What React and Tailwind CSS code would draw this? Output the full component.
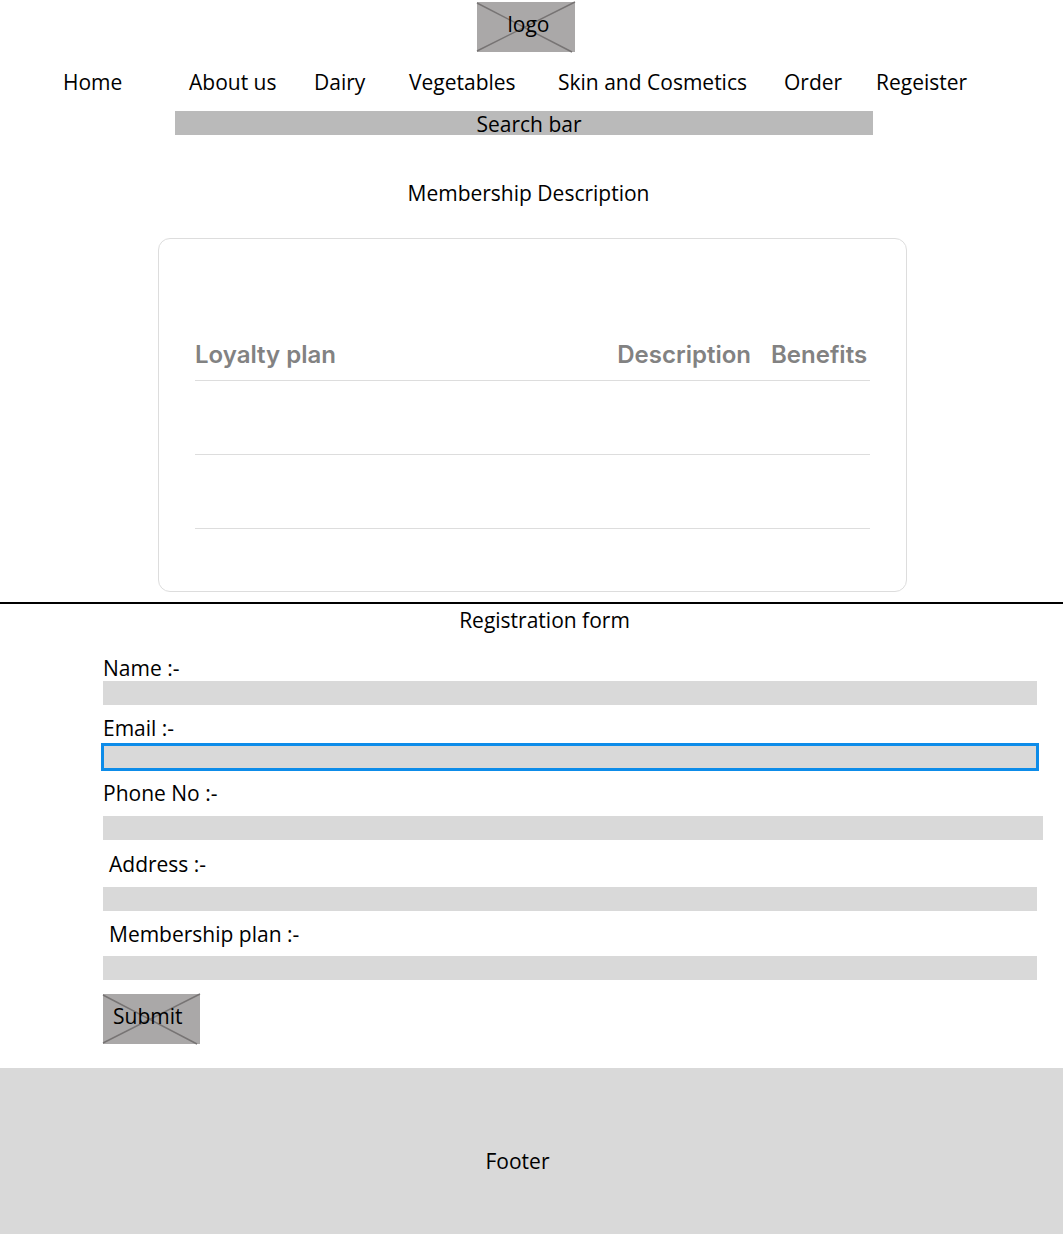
const navItems = ["Home", "About us", "Dairy", "Vegetables", "Skin and Cosmetics", "Order", "Regeister"];

const fields = [
  { id: "name", label: "Name :-", type: "text", row: "mt-6", labelBox: "mb-px", input: "mr-[26px] h-6" },
  { id: "email", label: "Email :-", type: "email", row: "mt-[11px]", labelBox: "mb-[3px]", input: "-ml-0.5 mr-6 h-7 border-3 border-[#0d8ce9]" },
  { id: "phone", label: "Phone No :-", type: "tel", row: "mt-2.5", labelBox: "mb-[11px]", input: "mr-5 h-6" },
  { id: "address", label: "Address :-", type: "text", row: "mt-3", labelBox: "mb-[11px] ml-1.5", input: "mr-[26px] h-6" },
  { id: "plan", label: "Membership plan :-", type: "text", row: "mt-[11px]", labelBox: "mb-2.5 ml-1.5", input: "mr-[26px] h-6" },
];

function CrossedBox() {
  return (
    <svg className="absolute inset-0 h-full w-full overflow-visible" viewBox="0 0 98 50" preserveAspectRatio="none" aria-hidden="true">
      <path d="M0 1L95 50M98 0L0 49" stroke="#777474" strokeWidth="1.5" fill="none" />
    </svg>
  );
}

export default function App() {
  return (
    <div className="flex min-h-screen flex-col bg-white font-['Open_Sans','Noto_Sans',sans-serif] text-[21px] leading-6 text-black">
      <header className="pt-0.5">
        <a href="#" className="relative mx-auto flex h-[50px] w-[98px] -translate-x-1.5 justify-center bg-[#aaa8a8] pt-2.5 pl-1.5">
          <CrossedBox />
          <span className="relative">logo</span>
        </a>
        <nav className="mt-[18px] grid grid-cols-[126fr_125fr_95fr_149fr_226fr_92fr_187fr] pl-[63px] whitespace-nowrap">
          {navItems.map((label) => (
            <a key={label} href="#">{label}</a>
          ))}
        </nav>
        <input aria-label="Search" placeholder="Search bar" className="mt-[17px] ml-[175px] block h-6 w-[calc(100%-365px)] bg-[#bababa] pt-px pl-2.5 text-center placeholder:text-black" />
      </header>

      <main>
        <h1 className="mt-[46px] pr-1.5 text-center">Membership Description</h1>
        <section className="mt-[33px] mr-[156px] ml-[158px] rounded-xl border border-[#ddd] px-9 pt-[91px] pb-[62px]">
          <table className="w-full font-['Inter',sans-serif] text-[24px] text-[#828282]">
            <thead>
              <tr className="h-[50px] border-b border-[#ddd]">
                <th className="text-left font-semibold">Loyalty plan</th>
                <th className="pr-5 text-right font-semibold">Description</th>
                <th className="w-[99px] text-left font-semibold">Benefits</th>
              </tr>
            </thead>
            <tbody>
              <tr className="h-[74px] border-b border-[#ddd]"><td /><td /><td /></tr>
              <tr className="h-[74px] border-b border-[#ddd]"><td /><td /><td /></tr>
            </tbody>
          </table>
        </section>
        <hr className="mt-2.5 border-t-2 border-black" />
        <form className="pl-[103px]">
          <h2 className="mt-1 pr-[77px] text-center">Registration form</h2>
          {fields.map((field) => (
            <div key={field.id} className={`flex flex-col ${field.row}`}>
              <label htmlFor={field.id} className={`self-start ${field.labelBox}`}>{field.label}</label>
              <input id={field.id} type={field.type} className={`bg-[#d9d9d9] px-2 ${field.input}`} />
            </div>
          ))}
          <button type="submit" className="relative mt-3.5 flex h-[50px] w-[97px] bg-[#aaa8a8] pt-2.5 pl-2.5">
            <CrossedBox />
            <span className="relative">Submit</span>
          </button>
        </form>
      </main>
      <footer className="mt-6 flex min-h-[165px] grow items-center justify-center bg-[#d9d9d9] pt-5 pr-7">Footer</footer>
    </div>
  );
}
